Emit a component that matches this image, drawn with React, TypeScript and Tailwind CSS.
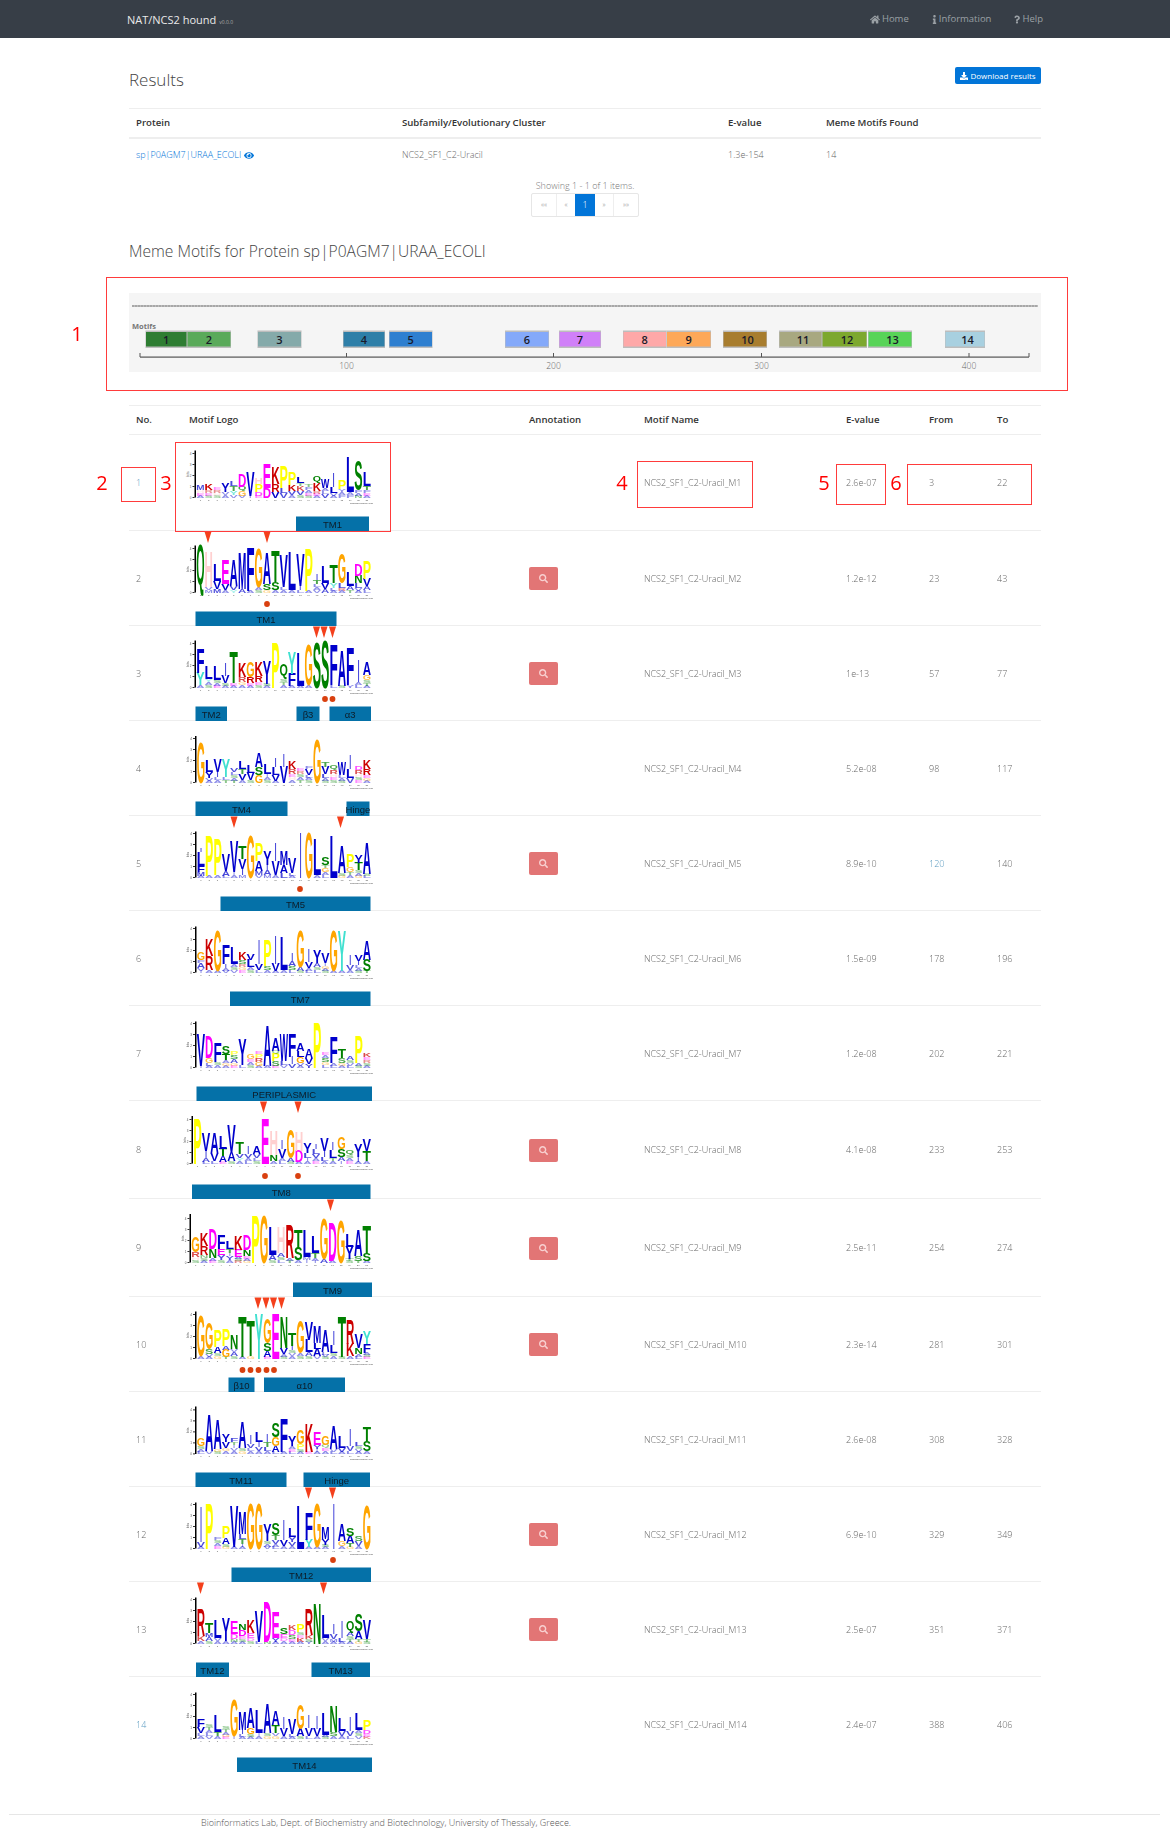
import React from 'react';
import { FaDownload, FaEye, FaHome, FaInfo, FaQuestion, FaSearch } from 'react-icons/fa';

type Row = {
  no: number;
  name: string;
  ev: string;
  from: number;
  to: number;
  btn?: boolean;
  top: number;
  h: number;
  ax: number;
  at: number;
  ab: number;
  bars: [number, number, string][];
  tris?: number[];
  dots?: number[];
  dotY?: number;
  cols: string;
};

// each column top to bottom, letter + height in px, lowercase y is a blue Y
const rows: Row[] = [
  { no: 1, name: 'NCS2_SF1_C2-Uracil_M1', ev: '2.6e-07', from: 3, to: 22, top: 435, h: 96, ax: 195.5, at: 450.5, ab: 497.5,
    bars: [[296, 369, 'TM1']],
    cols: 'M5 H3 E3 A2|K6 R3 E3 S2|E3 R3 H3 S2|y9 V3 A3|L5 T5 Y4 V3|D13 Q4 G5 V2|V24 I2|H6 P8 D4 E2|E24 D10|K16 R8 V6|P22 L5 V5|P12 K6 V4 A3|L6 T3 K5 V4 S3|T3 F3 A3 E3 S2|Q6 K8 R3 E2 A2|W9 A3 L3 V4|I14 L6 V3 A2|P9 y3 A3 F3|L34 A3 F3|S29 F3 A3 N2|L14 T4 F3 E3 A2' },
  { no: 2, name: 'NCS2_SF1_C2-Uracil_M2', ev: '1.2e-12', from: 23, to: 43, btn: true, top: 531, h: 95, ax: 195.5, at: 545.5, ab: 592.5,
    bars: [[195.5, 336.5, 'TM1']], tris: [208, 267], dots: [267], dotY: 604,
    cols: 'Q47|H34 V3 M3|L16 V8 M4|E24 V6 A3|A26 V4 Y3|M36 A4|F43 A2|G38 A3 S3|A30 S6 G3|T30 S8 A3|V32 L3 A3|L38 A3|V32 I4 L3|P42 A2|I6 T4 L3 A3 V3|L17 V6 A4|T18 Y5 L3 A2|G29 L5 R3 A2|L14 A4 T3|D11 N7 L5 V3 A2|P18 V7 A4 L3' },
  { no: 3, name: 'NCS2_SF1_C2-Uracil_M3', ev: '1e-13', from: 57, to: 77, btn: true, top: 626, h: 95, ax: 195.5, at: 640.5, ab: 687.5,
    bars: [[195.5, 227, 'TM2'], [296.5, 319.5, 'β3'], [329.5, 371, 'α3']], tris: [316.5, 324, 332.5], dots: [325, 332.5], dotY: 699,
    cols: 'F24 Y12 A3|L12 Y3 A3 S3|L14 S3 A3 E2|I12 V7 S3 A2|T30 E3 A2|K14 R5 G3 A3|G15 R6 E3 A2|K14 R6 E3 S3|y23 S2 A2|P44|Q13 S3 T3 A3|Y22 F12 A2|L33 A2|G40 A3|S44|S47|F40 L3|A35 S2|F37 y3|I21 A3 L3|A13 G5 S3 T3 A2' },
  { no: 4, name: 'NCS2_SF1_C2-Uracil_M4', ev: '5.2e-08', from: 98, to: 117, top: 721, h: 95, ax: 196, at: 736, ab: 782.5,
    bars: [[195.5, 287.5, 'TM4'], [346.5, 369.5, 'Hinge']],
    cols: 'G40|L11 y6 V3 A2|V12 I5 L3 A3|Y18 L3 T3|V4 L3 S3 A3 T2|L8 T5 V6 A3|L8 V7 S3|A14 S8 G8|L10 I3 A3 S3|I9 L8 V6 A2|I13 V16|K7 R5 E3 H3 A3|E3 R3 S3 A3 T3|F3 V6 L3 A2 S3|G43|T5 V7 L4 A3 S2|Q4 R4 H3 E3 S3|W13 L3 A3 S2|I14 L9 V5|D4 R4 H3 S3 E3|K9 R6 E3 G3 A2' },
  { no: 5, name: 'NCS2_SF1_C2-Uracil_M5', ev: '8.9e-10', from: 120, to: 140, btn: true, top: 816, h: 95, ax: 196, at: 831.5, ab: 877.5,
    bars: [[220.5, 370.5, 'TM5']], tris: [234, 340.5], dots: [300], dotY: 889,
    cols: 'I4 L14 F6 M4 A2|P40 A2|P36 A3|V17 A5 L2|V30 I3 A3|T12 V10 I6 M3|G42|P18 A10 M4 V3|y14 I5 A5 M3|I18 V14 A3|M14 A8 L5|V15 L3 A2|I44|G45|L36 A3|S8 T3 G4 A3 L3|L42|A27 S3 G2|P13 G5 T3 A3|y7 T7 S3 A3 G2|A30 S2 L2' },
  { no: 6, name: 'NCS2_SF1_C2-Uracil_M6', ev: '1.5e-09', from: 178, to: 196, top: 911, h: 95, ax: 196, at: 926.5, ab: 972.5,
    bars: [[230, 370.5, 'TM7']],
    cols: 'G7 F3 A5 V3 I2|K17 R14 A3|G39 A2|F19 I4 A3 V2|L16 A3 S3 V3|K7 S4 R3 G3 E3|V6 L7 A3 S3|I24 V6 L3|P26 S4 A3|I28 V7 A2|L33 A3|I8 A5 S4 L3|G36 A4 S2|I13 V6 A3 L2|y12 A4 S3 L3|V10 I3 G3 A2 S2|G40 A2|Y40 A2|I10 V5 A3|V6 I4 L3 A3 S2|A19 S11 T2' },
  { no: 7, name: 'NCS2_SF1_C2-Uracil_M7', ev: '1.2e-08', from: 202, to: 221, top: 1006, h: 95, ax: 196, at: 1021.5, ab: 1067.5,
    bars: [[196.5, 372, 'PERIPLASMIC']],
    cols: 'V32 I2|D22 G5 L3 A2|F19 S3 A3|S7 T6 A3 G3 A2|P4 S4 A4 G3 E2|y25 L3|G5 E3 A3 S3|E3 P4 R4 G4 A2|A39 A2|A12 Q3 P7 S5 E2|W27 L4 V3|F23 I7 V4|A8 L6 G6 V3 A2|A9 V6 y4|P45|E3 A3 S4 G3 L3|F25 A3 L2|T9 S5 G3 A2|A4 S3 V3 L2|P27 A3 S2|K4 E3 R3 S3 A2' },
  { no: 8, name: 'NCS2_SF1_C2-Uracil_M8', ev: '4.1e-08', from: 233, to: 253, btn: true, top: 1101, h: 98, ax: 192.5, at: 1116, ab: 1163.5,
    bars: [[192, 370.5, 'TM8']], tris: [263.5, 298], dots: [265, 298], dotY: 1176,
    cols: 'P44|V18 I7 A4 L2|A20 V8 L3|L12 T7 A6 E2|V27 A9 S3|T11 V4 Y3 A3|I7 V4 A3 L3|A8 V4 L3 S3|E45|H24 N6 A3|I9 V9 A3 L3|G28 A4 S2|H19 D11 A2|y10 L5 I3 A3|I5 L5 V4 A3 E3|V12 I6 L4 A3|I7 L8 T3 A3|G11 S8 A4 I3|Q4 S3 A3 E3|y13 I5 A2|V11 T10 A3' },
  { no: 9, name: 'NCS2_SF1_C2-Uracil_M9', ev: '2.5e-11', from: 254, to: 274, btn: true, top: 1199, h: 98, ax: 190.5, at: 1214, ab: 1262.5,
    bars: [[293, 372, 'TM9']], tris: [330.5],
    cols: 'G15 R5 H3 S3|K13 R9 N3 S3 A2|D20 N9 A3 E2|F14 E6 y5 S3|L7 T4 I3 y4 A3|K14 E7 A2 S2 R2|D15 N6 E3 A2 G2|P47|G47|L28 A5 S3|H26 A4 S3 L3|R33 A3 T2|T18 S12 A3|L27 M3 I3|L17 T5 A3 I2|G39 A4|D38 A2|G42|L13 y12 T2 S2|A26 S5 T2|T28 S7 A2' },
  { no: 10, name: 'NCS2_SF1_C2-Uracil_M10', ev: '2.3e-14', from: 281, to: 301, btn: true, top: 1297, h: 95, ax: 196, at: 1311.5, ab: 1358.5,
    bars: [[228.5, 254.5, 'β10'], [264, 345, 'α10']], tris: [258, 266, 273.5, 281.5], dots: [242.5, 250.5, 258.5, 266.5, 274], dotY: 1370,
    cols: 'G40 A3|G25 S5 V3 A2|P16 A6 S3 G3|P16 A4 G7 T2|N14 V3 A4 S3|T39 A2|T34 G3|Y44|G24 S8 A6 E2|E45|N30 V6 A3 S2|T12 I4 S3 V3 A3|G32 A3 S3|V18 L12 A4 S3|M16 L6 A7 V3|A22 L3 V2 S2|I14 L8 S3 A3|T39 S2|R24 K12 A3|V14 N6 A3 L2|Y13 F9 A2 S2 E2' },
  { no: 11, name: 'NCS2_SF1_C2-Uracil_M11', ev: '2.6e-08', from: 308, to: 328, top: 1392, h: 95, ax: 196, at: 1406.5, ab: 1454,
    bars: [[195.5, 286.5, 'TM11'], [303.5, 370, 'Hinge']],
    cols: 'G7 S3 A3 L2|A36 V3|A29 G3 S2|y7 V6 G3 A3|F4 T3 I3 V3 A3|A26 S3 G3|I9 V4 L3 A3|L10 I5 V4 A3|I8 T5 L4 A3|S14 G9 A6 L2|F33 A2|y10 A3 E3 L2|G14 P5 S3 A2|K28 E2|E12 y4 I3 A2|G9 Q3 E3 A3|A23 V3 L2|L11 V4 A2|I17 V5 L3|L4 S3 V3 A2|T14 S10 A3' },
  { no: 12, name: 'NCS2_SF1_C2-Uracil_M12', ev: '6.9e-10', from: 329, to: 349, btn: true, top: 1487, h: 95, ax: 196, at: 1502.5, ab: 1548.5,
    bars: [[231.5, 371, 'TM12']], tris: [308.5, 332.5], dots: [333], dotY: 1560,
    cols: 'I34 V5 A2|P44|F3 S3 A3 E3|P11 A6 S3 G2|V41 A2|M22 L5 T5 I3 A2|G44|G44|y17 S3 A3 V2|S11 T5 V4 A3 L2|I20 V6 A3|L9 y5 V4 A3|L43|F27 Y7 A2|G43 A2|M11 y6 S2 A2|I44|A17 G5 A3|S7 A7 T4 G2|S5 V5 A3|G43' },
  { no: 13, name: 'NCS2_SF1_C2-Uracil_M13', ev: '2.5e-07', from: 351, to: 371, btn: true, top: 1582, h: 95, ax: 196, at: 1597.5, ab: 1643.5,
    bars: [[196, 229, 'TM12'], [311.5, 370, 'TM13']], tris: [200.5, 323.5],
    cols: 'R27 K5 A3|T10 M4 A4 S3|L18 V3 A3|y23 A3|E13 D5 N3 A2|N6 D6 E3 S3 A2|K13 E5 D3 S3|V30 L2|D40 N2|E25 y4 A2|S6 E4 D3 A3|K5 D5 S4 E3 A2|P7 S3 E3 K4 A2|R25 K4 S3 y2|N40|L23 V3 A3|I10 V5 M3 A2|I17 L4 A2|Q10 A4 S3 T3 A2|S17 A8 T3 G2|V19 T3 S2' },
  { no: 14, name: 'NCS2_SF1_C2-Uracil_M14', ev: '2.4e-07', from: 388, to: 406, top: 1677, h: 95, ax: 196, at: 1692.5, ab: 1738.5,
    bars: [[237, 372, 'TM14']],
    cols: 'F8 V6 L3 A3|S3 T3 A3 L3 V3|L16 T4 A3|S3 T3 A3 G2 E2|G36 I3|M18 I4 L3 A2|A20 G6 S3 A2|L23 I3 A3|A29 S3 G3|A14 T8 V3 G3|I11 V7 A3|V15 L3 A2|G24 A7 S3|I12 V8 L3|I13 V7 A3|L22 A2 S2|N25 S4 A3|L12 V5 A3|I14 V5 L3|L17 A3 S3 V3|P10 D4 E3 K2' },
];

const colours: Record<string, string> = {
  A: '#0000cc', L: '#0000cc', I: '#0000cc', V: '#0000cc', F: '#0000cc', M: '#0000cc', W: '#0000cc', y: '#0000cc',
  G: '#ffa500', P: '#ffff00', T: '#008000', S: '#008000', N: '#008000', Q: '#008000', Y: '#40e0d0',
  H: '#ffd0d0', E: '#ff00ff', D: '#ff00ff', K: '#cc0000', R: '#cc0000',
};

const motifs: [number, number, string][] = [
  [145.5, 187, '#2e7d32'], [187, 231, '#5aaa5a'], [257.5, 301.5, '#85aaaa'], [343, 385, '#2e7fa8'], [389, 432.5, '#2e7fd0'],
  [505, 549, '#84a9fa'], [559, 601, '#d080f8'], [623, 666.5, '#fea8a8'], [666.5, 711, '#fda858'], [723, 767, '#a87d2e'],
  [779, 822, '#a8a880'], [822, 867, '#7da82e'], [868, 912, '#58d458'], [945, 985, '#a8d0e0'],
];

const Logo = ({ row }: { row: Row }) => {
  const cols = row.cols.split('|');
  const start = row.ax + 0.8;
  const w = (371 - start) / cols.length;
  const bottom = row.top + row.h;
  return (
    <svg width={200} height={row.h} className="block overflow-visible">
      <g transform={`translate(-182,${-row.top})`}>
        <rect x={row.ax - 1} y={row.at} width={1.5} height={row.ab - row.at} fill="#000" />
        {[0, 1, 2, 3, 4].map((t) => (
          <g key={t}>
            <rect x={row.ax - 3} y={row.ab - t * 11 - 0.5} width={2} height={0.8} fill="#000" />
            <text x={row.ax - 5} y={row.ab - t * 11 + 1} fontSize={3} fill="#555" textAnchor="middle" fontFamily="Liberation Sans">{t}</text>
          </g>
        ))}
        <text transform={`translate(${row.ax - 7},${(row.at + row.ab) / 2}) rotate(-90)`} fontSize={3.5} fill="#555" textAnchor="middle" fontFamily="Liberation Sans">bits</text>
        <g className="blur-[0.35px]">
          {cols.map((col, i) => {
            let y = row.ab;
            const parts = col.split(' ').reverse();
            return (
              <g key={i}>
                {parts.map((p, j) => {
                  const key = p[0];
                  const lh = Number(p.slice(1));
                  const narrow = key === 'I';
                  const lw = narrow ? w * 0.25 : w;
                  const x = start + i * w + (w - lw) / 2;
                  // Q has a tail below the baseline, keep it inside its slot
                  const tail = key === 'Q';
                  const el = (
                    <text
                      key={j}
                      transform={`translate(${x},${tail ? y - lh * 0.17 : y}) scale(1,${lh / (tail ? 8.3 : 6.88)})`}
                      fontSize={10}
                      fontWeight={700}
                      fontFamily="Liberation Sans"
                      fill={colours[key]}
                      fillOpacity={lh <= 3 ? 0.45 : lh <= 5 ? 0.7 : narrow ? 0.7 : 1}
                      textLength={lw}
                      lengthAdjust="spacingAndGlyphs"
                    >
                      {key.toUpperCase()}
                    </text>
                  );
                  y -= lh;
                  return el;
                })}
                <text x={start + (i + 0.5) * w} y={row.ab + 3} fontSize={2.5} fill="#555" textAnchor="middle" fontFamily="Liberation Sans">{i + 1}</text>
              </g>
            );
          })}
        </g>
        <text x={350} y={row.ab + 6} fontSize={2.4} fill="#444" fontFamily="Liberation Sans">weblogo.berkeley.edu</text>
        {row.tris?.map((x) => (
          <polygon key={x} points={`${x - 3.5},${row.top + 0.5} ${x + 3.5},${row.top + 0.5} ${x},${row.top + 12}`} fill="#f4401c" />
        ))}
        {row.dots?.map((x) => <circle key={x} cx={x} cy={row.dotY} r={2.9} fill="#d9400f" />)}
        {row.bars.map(([a, b, label]) => (
          <g key={label + a}>
            <rect x={a} y={bottom - 14.5} width={b - a} height={14.5} fill="#0571a8" />
            <text x={(a + b) / 2} y={bottom - 3.5} fontSize={9.5} fill="#0d1c28" textAnchor="middle" fontFamily="Liberation Sans">{label}</text>
          </g>
        ))}
      </g>
    </svg>
  );
};

const MotifMap = () => (
  <svg width={912} height={79} className="block">
    <g transform="translate(-129,-293)">
      <rect x={132} y={305} width={906} height={2} fill="#bdbdbd" />
      <line x1={132} x2={1038} y1={306} y2={306} stroke="#777" strokeWidth={0.6} strokeDasharray="2 1" />
      <text x={132} y={329} fontSize={7.5} fontWeight={700} fill="#777" fontFamily="Open Sans">Motifs</text>
      {motifs.map(([a, b, c], i) => (
        <g key={i}>
          <rect x={a} y={330.5} width={b - a} height={17.5} fill="#bdbdbd" />
          <rect x={a + 0.5} y={332} width={b - a - 1} height={14.5} fill={c} />
          <text x={(a + b) / 2 + (i >= 9 ? 2.5 : 0)} y={344} fontSize={11} fontWeight={600} fill="#1a1a2a" textAnchor="middle" fontFamily="Open Sans">{i + 1}</text>
        </g>
      ))}
      <rect x={140} y={356.5} width={889} height={1.2} fill="#555" />
      {[140, 346.5, 553.5, 761.5, 969, 1029].map((x) => (
        <rect key={x} x={x - 0.5} y={353} width={1} height={4} fill="#555" />
      ))}
      {[[346.5, '100'], [553.5, '200'], [761.5, '300'], [969, '400']].map(([x, t]) => (
        <text key={t} x={x} y={369} fontSize={8.5} fontWeight={300} fill="#666" textAnchor="middle" fontFamily="Open Sans">{t}</text>
      ))}
    </g>
  </svg>
);

// numbered red boxes drawn over the screenshot
const marks: [number, number, number, number][] = [
  [106, 277, 962, 114], [121, 467, 35, 35], [175, 442, 216, 90], [637, 461, 116, 47], [836, 464, 50, 41], [907, 464, 125, 41],
];
const markNumbers: [number, number, string][] = [
  [77, 334, '1'], [102, 483, '2'], [166, 483, '3'], [622, 483, '4'], [824, 483, '5'], [896, 483, '6'],
];

const motifCols = 'grid grid-cols-[53px_340px_115px_202px_83px_68px_51px]';
const mainCols = 'grid grid-cols-[266px_326px_98px_222px]';

export default function App() {
  return (
    <div className="relative h-[1839px] bg-white font-['Open_Sans',sans-serif] text-[9px] font-light text-[#666]">
      <nav className="flex h-[38px] items-center justify-between bg-[#373e47] pl-[127px] pr-[127px]">
        <div className="flex items-baseline gap-[3px] pt-[2px] text-[11px] font-normal text-[#e9e9e9]">
          NAT/NCS2 hound <span className="text-[5px] text-[#aaa]">v0.0.0</span>
        </div>
        <div className="flex gap-[23px] text-[9.5px] font-normal text-[#9aa0a5]">
          <span className="flex items-center gap-[2px]"><FaHome className="h-[9px] w-[10px]" /> Home</span>
          <span className="flex items-center gap-[2px]"><FaInfo className="h-[9px] w-[5px]" /> Information</span>
          <span className="flex items-center gap-[2px]"><FaQuestion className="h-[9px] w-[6px]" /> Help</span>
        </div>
      </nav>

      <main className="mx-auto w-[912px]">
        <div className="flex h-[70px] items-start justify-between pt-[29px]">
          <h1 className="text-[17px] leading-[26px] font-light text-[#444]">Results</h1>
          <button className="flex h-[17px] w-[86px] items-center justify-center gap-[2px] rounded-[2px] bg-[#0275d8] pt-[1px] text-[8px] font-normal text-white">
            <FaDownload className="h-[8px] w-[8px]" /> Download results
          </button>
        </div>

        <div className={`${mainCols} h-[31px] items-center border-t border-b-2 border-t-[#eee] border-b-[#eee] pl-[7px] text-[9.6px] font-semibold text-[#333]`}>
          <div>Protein</div>
          <div>Subfamily/Evolutionary Cluster</div>
          <div>E-value</div>
          <div>Meme Motifs Found</div>
        </div>
        <div className={`${mainCols} h-[32px] items-center pl-[7px]`}>
          <div className="flex items-center gap-[3px] text-[#0275d8]">sp|P0AGM7|URAA_ECOLI <FaEye className="h-[9px] w-[10px]" /></div>
          <div>NCS2_SF1_C2-Uracil</div>
          <div>1.3e-154</div>
          <div>14</div>
        </div>
        <div className="mt-[8px] flex h-[14px] items-center justify-center text-[#777]">Showing 1 - 1 of 1 items.</div>
        <div className="flex justify-center">
          <div className="flex h-[24px] w-[108px] overflow-hidden rounded-[2px] border border-[#e6e6e6] text-[7px] text-[#888]">
            <span className="flex w-[25px] items-center justify-center border-r border-[#eee]">««</span>
            <span className="flex w-[18px] items-center justify-center">«</span>
            <span className="flex w-[20px] items-center justify-center bg-[#0275d8] text-[9px] text-white">1</span>
            <span className="flex w-[19px] items-center justify-center border-r border-[#eee]">»</span>
            <span className="flex flex-1 items-center justify-center">»»</span>
          </div>
        </div>
        <h2 className="mt-[22px] h-[24px] text-[15.6px] leading-[24px] font-light text-[#444]">Meme Motifs for Protein sp|P0AGM7|URAA_ECOLI</h2>
        <div className="mt-[30px] h-[79px] bg-[#f5f5f5]">
          <MotifMap />
        </div>

        <div className={`${motifCols} mt-[33px] h-[30px] items-center border-y border-[#eee] text-[9.6px] font-semibold text-[#333]`}>
          <div className="pl-[7px]">No.</div>
          <div className="pl-[7px]">Motif Logo</div>
          <div className="pl-[7px]">Annotation</div>
          <div className="pl-[7px]">Motif Name</div>
          <div className="pl-[7px]">E-value</div>
          <div className="pl-[7px]">From</div>
          <div className="pl-[7px]">To</div>
        </div>
        {rows.map((row) => (
          <div
            key={row.no}
            className={`${motifCols} items-center border-[#eee] not-last:border-b`}
            style={{ height: row.h }}
          >
            <div className={row.no === 1 || row.no === 14 ? 'pl-[7px] text-[#5b9bc0]' : 'pl-[7px]'}>{row.no}</div>
            <div className="h-full"><Logo row={row} /></div>
            <div className="pl-[7px]">
              {row.btn && (
                <button className="flex h-[23px] w-[29px] items-center justify-center rounded-[2px] bg-[#e27575] text-[#f8d0d0]">
                  <FaSearch className="h-[9px] w-[9px]" />
                </button>
              )}
            </div>
            <div className="pl-[7px]">{row.name}</div>
            <div className="pl-[7px]">{row.ev}</div>
            <div className={row.from === 120 ? 'pl-[7px] text-[#5b9bc0]' : 'pl-[7px]'}>{row.from}</div>
            <div className="pl-[7px]">{row.to}</div>
          </div>
        ))}
      </main>

      <footer className="absolute top-[1814px] left-[9px] h-[20px] w-[1151px] border-t border-[#e6e6e6] pl-[192px] text-[9px] leading-[16px] text-[#555]">
        Bioinformatics Lab, Dept. of Biochemistry and Biotechnology, University of Thessaly, Greece.
      </footer>

      {marks.map(([x, y, w, h]) => (
        <div key={x} className="absolute border border-[#ff3b3b]" style={{ left: x, top: y, width: w, height: h }} />
      ))}
      {markNumbers.map(([x, y, t]) => (
        <div key={t} className="absolute -translate-x-1/2 -translate-y-1/2 text-[20px] font-normal text-[#f00]" style={{ left: x, top: y }}>{t}</div>
      ))}
    </div>
  );
}
